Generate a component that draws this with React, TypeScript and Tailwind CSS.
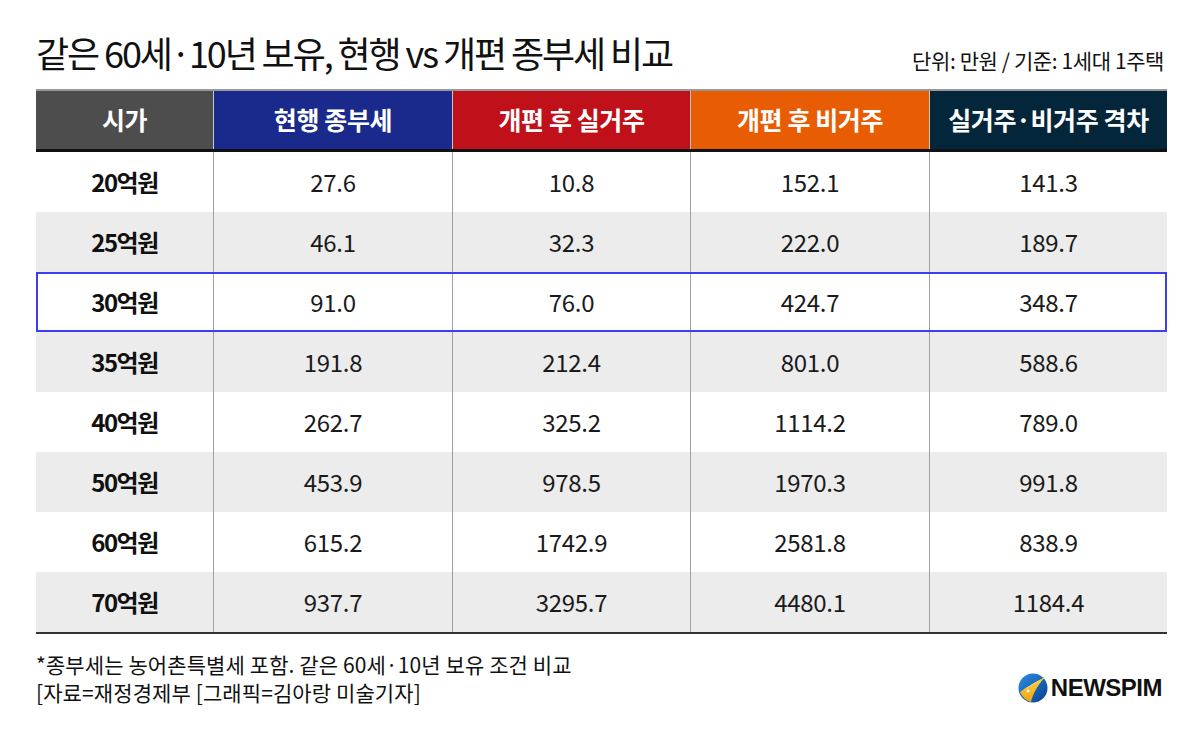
import React from "react";

// 같은 60세·10년 보유 종부세 비교 표

const headers = [
  { label: "시가", bg: "bg-[#4d4d4d]" },
  { label: "현행 종부세", bg: "bg-[#1a2a8c]" },
  { label: "개편 후 실거주", bg: "bg-[#c0111b]" },
  { label: "개편 후 비거주", bg: "bg-[#e85d04]" },
  { label: "실거주·비거주 격차", bg: "bg-[#04263a]" },
];

const rows: string[][] = [
  ["20억원", "27.6", "10.8", "152.1", "141.3"],
  ["25억원", "46.1", "32.3", "222.0", "189.7"],
  ["30억원", "91.0", "76.0", "424.7", "348.7"],
  ["35억원", "191.8", "212.4", "801.0", "588.6"],
  ["40억원", "262.7", "325.2", "1114.2", "789.0"],
  ["50억원", "453.9", "978.5", "1970.3", "991.8"],
  ["60억원", "615.2", "1742.9", "2581.8", "838.9"],
  ["70억원", "937.7", "3295.7", "4480.1", "1184.4"],
];

const cols = "grid grid-cols-[177px_239px_238px_239px_238px]";

function Logo() {
  return (
    <div className="flex items-center gap-[3px]">
      <svg width="30" height="30" viewBox="0 0 30 30">
        <defs>
          <linearGradient id="np-blue" x1="0" y1="0" x2="1" y2="1">
            <stop offset="0" stopColor="#2e8ee0" />
            <stop offset="1" stopColor="#0a3f8f" />
          </linearGradient>
          <linearGradient id="np-yel" x1="0" y1="0" x2="0" y2="1">
            <stop offset="0" stopColor="#ffd23a" />
            <stop offset="1" stopColor="#f2a413" />
          </linearGradient>
        </defs>
        <circle cx="15" cy="15" r="14.5" fill="url(#np-blue)" />
        <path d="M2 19 C 8 15, 16 10, 27 4 C 20 12, 15 20, 13 29 C 9 28, 5 25, 2 19 Z" fill="url(#np-yel)" />
        <path d="M2 19 C 8 15, 16 10, 27 4 C 17 10, 9 15, 2 19 Z" fill="#ffffff" opacity="0.9" />
        <circle cx="10" cy="18" r="1.4" fill="#ffffff" />
      </svg>
      <span className="font-['Liberation_Sans',sans-serif] text-[24px] font-bold tracking-[-0.5px] text-[#111]">
        NEWSPIM
      </span>
    </div>
  );
}

export default function App() {
  return (
    <div className="h-[741px] w-[1200px] bg-white font-['Noto_Sans_CJK_KR','Noto_Sans',sans-serif] text-[#111]">
      <div className="px-[36px] pt-[27px]">
        {/* ─── 제목 ─── */}
        <div className="flex h-[48px] items-end justify-between">
          <h1 className="text-[36px] font-normal leading-[46px] tracking-[-2.1px] text-[#111]">
            같은 60세·10년 보유, 현행 vs 개편 종부세 비교
          </h1>
          <span className="pb-[2px] text-[21px] leading-[26px] tracking-[-0.4px] text-[#111]">
            단위: 만원 / 기준: 1세대 1주택
          </span>
        </div>

        {/* ─── 표 ─── */}
        <div className="mt-[14px] w-[1131px]">
          <div className={`${cols} h-[63px] border-t-2 border-b-[3px] border-t-[#999] border-b-[#111]`}>
            {headers.map((h, i) => (
              <div
                key={h.label}
                className={`flex items-center justify-center ${h.bg} ${i > 0 ? "border-l border-[#c8c8c8]" : ""} text-[25px] font-bold tracking-[-0.4px] text-white`}
              >
                {h.label}
              </div>
            ))}
          </div>

          {rows.map((r, ri) => (
            <div
              key={r[0]}
              className={`relative ${cols} h-[60px] ${ri % 2 === 1 ? "bg-[#ececec]" : "bg-white"}`}
            >
              {r.map((c, ci) => (
                <div
                  key={ci}
                  className={`flex items-center justify-center ${ci > 0 ? "border-l border-[#a0a0a0]" : ""} ${ci === 0 ? "text-[24px] font-bold tracking-[-1.5px]" : "text-[24px] font-normal tracking-[-0.3px] text-[#1a1a1a]"}`}
                >
                  {c}
                </div>
              ))}
              {ri === 2 && (
                <div className="pointer-events-none absolute inset-0 border-2 border-[#3d3df2]" />
              )}
            </div>
          ))}
          <div className="h-[2px] bg-[#333]" />
        </div>

        {/* ─── 주석 ─── */}
        <div className="mt-[16px] flex items-end justify-between">
          <div className="text-[21px] leading-[28px] tracking-[0.1px] text-[#111]">
            <p>*종부세는 농어촌특별세 포함. 같은 60세·10년 보유 조건 비교</p>
            <p>[자료=재정경제부 [그래픽=김아랑 미술기자]</p>
          </div>
          <div className="pr-[2px]">
            <Logo />
          </div>
        </div>
      </div>
    </div>
  );
}
